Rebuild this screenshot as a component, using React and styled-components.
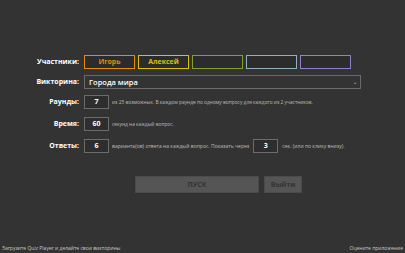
import styled, { createGlobalStyle } from 'styled-components';

const Global = createGlobalStyle`
html, body {
  margin: 0;
  padding: 0;
  background: #333333;
}
body {
  font-family: "Open Sans", "Noto Sans", sans-serif;
  color: #fff;
}
`

const Page = styled.div`
width: 405px;
height: 253px;
display: flex;
flex-direction: column;
background: #333333;
overflow: hidden;
`

const Form = styled.div`
display: grid;
grid-template-columns: 79px 1fr;
column-gap: 5px;
align-content: start;
padding-top: 55px;
`

const Label = styled.div`
font-size: 7px;
font-weight: 700;
text-align: right;
height: 14px;
line-height: 14px;
margin-top: ${p => p.$top || 0}px;
`

const Row = styled.div`
display: flex;
align-items: center;
height: 14px;
margin-top: ${p => p.$top || 0}px;
`

const Players = styled.div`
display: flex;
gap: 3px;
`

const Player = styled.div`
width: 49px;
height: 12px;
border: 1.5px solid ${p => p.$color};
background: #2c2c2c;
color: ${p => p.$color};
font-size: 7px;
font-weight: 700;
text-align: center;
line-height: 12px;
`

const Select = styled.div`
height: 12px;
border: 1px solid #6a6a6a;
display: flex;
align-items: center;
justify-content: space-between;
padding: 0 3px 0 4px;
box-sizing: content-box;
width: 268px;
font-size: 7.5px;
font-weight: 600;
color: #fff;
`

const Chevron = styled.span`
font-size: 5px;
color: #aaa;
`

const NumBox = styled.div`
width: 23px;
height: 12px;
border: 1px solid #6c6c6c;
background: #2e2e2e;
font-size: 7px;
font-weight: 700;
text-align: center;
line-height: 12px;
margin: 0 ${p => p.$right || 3}px 0 ${p => p.$left || 0}px;
`

const Hint = styled.span`
font-size: ${p => p.$size || 4.85}px;
color: #bdbdbd;
white-space: nowrap;
`

const Buttons = styled.div`
display: flex;
gap: 5px;
margin: 23px 0 0 135px;
`

const Button = styled.div`
width: ${p => p.$w}px;
height: 17px;
background: #555;
border: 1px solid #4a4a4a;
box-sizing: border-box;
color: #343434;
font-size: 7px;
font-weight: 700;
text-align: center;
line-height: 15px;
`

const Spacer = styled.div`
flex: 1;
`

const Footer = styled.div`
display: flex;
justify-content: space-between;
padding: 0 2px 2px 2px;
font-size: 5px;
color: #c8c8c8;
`

const players = [
  { name: 'Игорь', color: '#e88a0c' },
  { name: 'Алексей', color: '#d8c010' },
  { name: '', color: '#82a02c' },
  { name: '', color: '#8fb3b8' },
  { name: '', color: '#9080d0' },
]

export default function App() {
  return (
    <Page>
      <Global />
      <Form>
        <Label>Участники:</Label>
        <Row>
          <Players>
            {players.map((p, i) => (
              <Player key={i} $color={p.color}>{p.name}</Player>
            ))}
          </Players>
        </Row>

        <Label $top={6}>Викторина:</Label>
        <Row $top={6}>
          <Select>
            <span>Города мира</span>
            <Chevron>&#8964;</Chevron>
          </Select>
        </Row>

        <Label $top={6}>Раунды:</Label>
        <Row $top={6}>
          <NumBox>7</NumBox>
          <Hint>из 25 возможных. В каждом раунде по одному вопросу для каждого из 2 участников.</Hint>
        </Row>

        <Label $top={8}>Время:</Label>
        <Row $top={8}>
          <NumBox>60</NumBox>
          <Hint>секунд на каждый вопрос.</Hint>
        </Row>

        <Label $top={8}>Ответы:</Label>
        <Row $top={8}>
          <NumBox>6</NumBox>
          <Hint $size={5.05}>варианта(ов) ответа на каждый вопрос. Показать через</Hint>
          <NumBox $left={4} $right={4}>3</NumBox>
          <Hint $size={5.05}>сек. (или по клику внизу).</Hint>
        </Row>
      </Form>
      <Buttons>
        <Button $w={124}>ПУСК</Button>
        <Button $w={38}>Выйти</Button>
      </Buttons>
      <Spacer />
      <Footer>
        <span>Загрузите Quiz Player и делайте свои викторины</span>
        <span>Оцените приложение</span>
      </Footer>
    </Page>
  )
}
